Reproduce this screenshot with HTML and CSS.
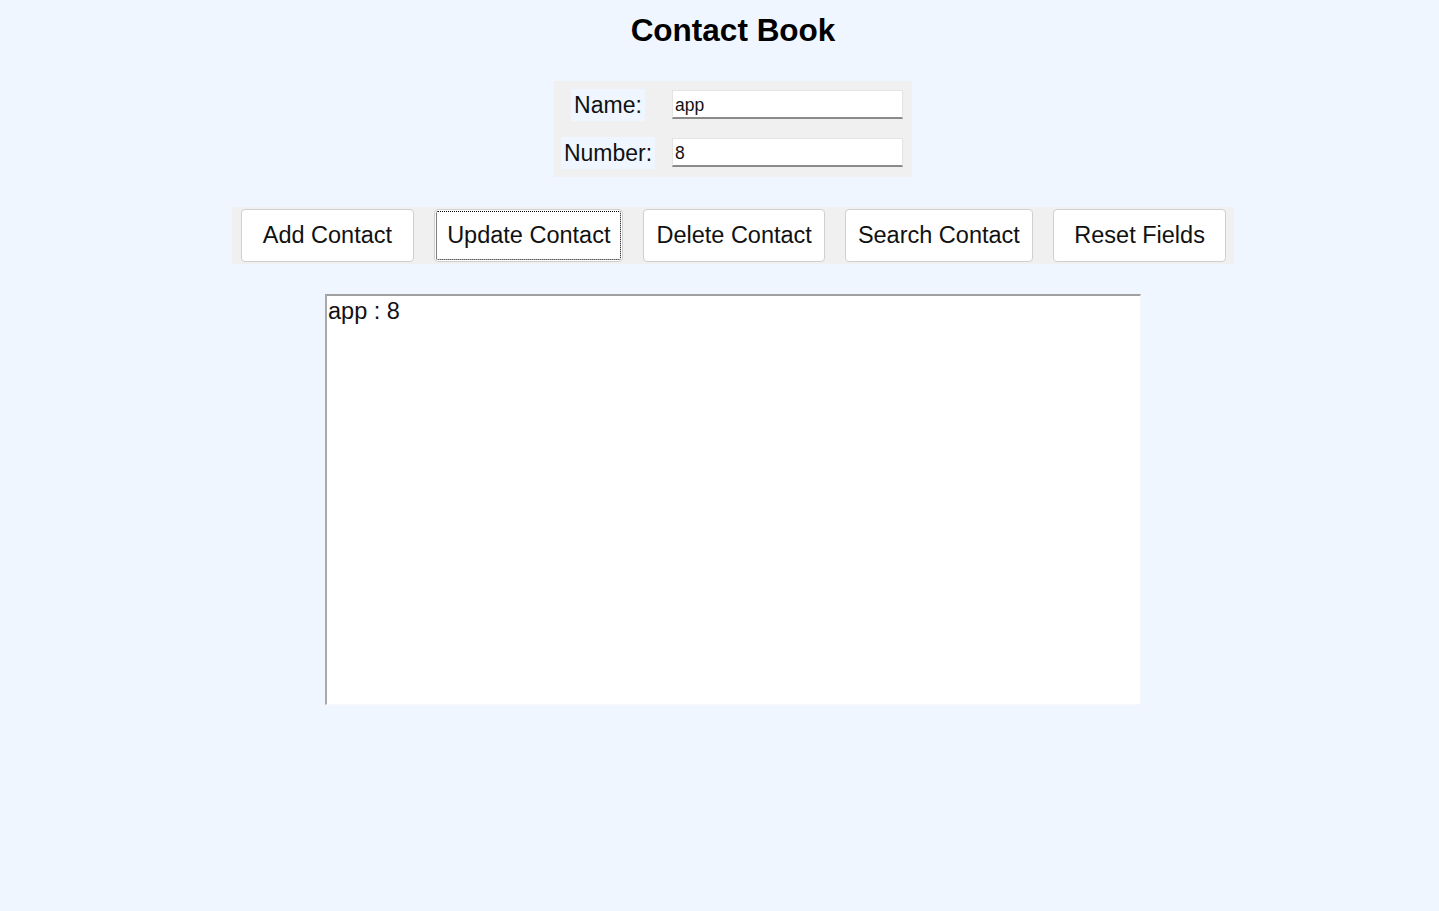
FILE: index.html
```html
<!DOCTYPE html>
<html lang="en">
<head>
<meta charset="utf-8">
<title>Contact Book</title>
<link rel="stylesheet" href="styles.css">
</head>
<body>
<div class="app">
  <h1 class="title">Contact Book</h1>
  <div class="form">
    <label class="label">Name:</label>
    <input class="entry" type="text" value="app">
    <label class="label">Number:</label>
    <input class="entry" type="text" value="8">
  </div>
  <div class="buttons">
    <button class="btn">Add Contact</button>
    <button class="btn focused">Update Contact</button>
    <button class="btn">Delete Contact</button>
    <button class="btn">Search Contact</button>
    <button class="btn">Reset Fields</button>
  </div>
  <div class="listbox">app : 8</div>
</div>
</body>
</html>
```
FILE: styles.css
```css
html, body {
  margin: 0;
  padding: 0;
  background: #eff6ff;
}
body {
  font-family: "Liberation Sans", Arial, sans-serif;
  color: #111;
}
.app {
  box-sizing: border-box;
  width: 100%;
  padding-left: 27px;
  display: flex;
  flex-direction: column;
  align-items: center;
}
.title {
  margin: 10px 0 0;
  font-size: 31.5px;
  font-weight: bold;
  line-height: 40px;
  color: #000;
}
.form {
  margin-top: 31px;
  background: #f0f0f0;
  padding: 8px 9px 8px 7px;
  display: grid;
  grid-template-columns: auto 231px;
  column-gap: 17px;
  row-gap: 16px;
}
.label {
  justify-self: center;
  background: #eff6ff;
  font-size: 23px;
  line-height: 32px;
  padding: 0 3px;
}
.entry {
  box-sizing: border-box;
  width: 231px;
  height: 29px;
  margin-top: 1px;
  align-self: start;
  background: #fff;
  border: 1px solid #e4e4e4;
  border-bottom: 2px solid #8a8a8a;
  border-radius: 0;
  padding: 2px 2px 0;
  font-family: "Liberation Sans", Arial, sans-serif;
  font-size: 17.5px;
  color: #111;
  outline: none;
}
.buttons {
  margin-top: 30px;
  background: #f0f0f0;
  padding: 2px 8px 2px 9px;
  display: flex;
  gap: 20px;
}
.btn {
  box-sizing: border-box;
  height: 53px;
  min-width: 173.5px;
  padding: 0 12px;
  background: #fff;
  border: 1px solid #cfcfcf;
  border-radius: 4px;
  font-family: "Liberation Sans", Arial, sans-serif;
  font-size: 23.5px;
  color: #111;
}
.btn.focused {
  outline: 1px dotted #000;
  outline-offset: -3px;
}
.listbox {
  box-sizing: border-box;
  margin-top: 30px;
  width: 816px;
  height: 411px;
  background: #fff;
  border-top: 2px solid #a0a0a0;
  border-left: 2px solid #a9a9a9;
  border-right: 1px solid #f6f6f6;
  border-bottom: 1px solid #f8f8f8;
  padding: 2px 1px;
  font-size: 23.5px;
  line-height: 26px;
}
```
